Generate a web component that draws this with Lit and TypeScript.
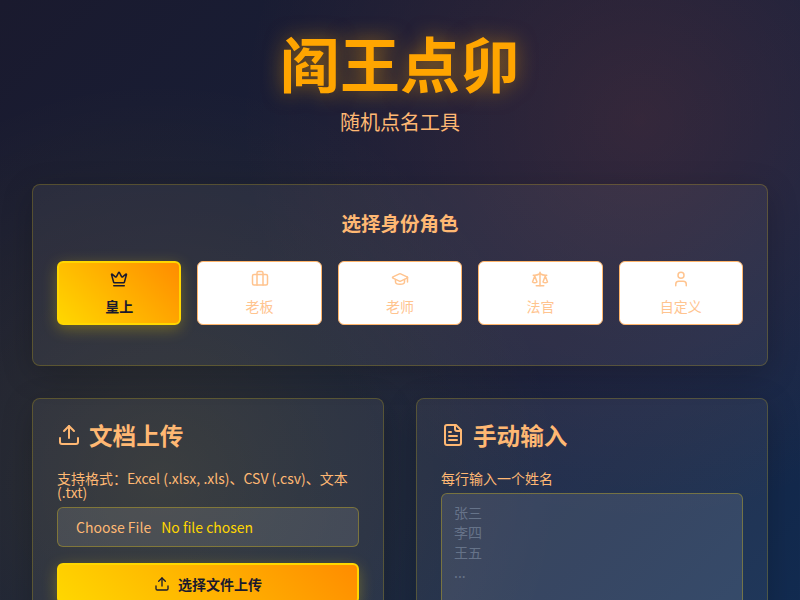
import { LitElement, html, css, svg } from "lit";
import { customElement } from "lit/decorators.js";

const icon = (size: number, body: unknown, sw = 2) => html`<svg width=${size} height=${size} viewBox="0 0 24 24" fill="none" stroke="currentColor" stroke-width=${sw} stroke-linecap="round" stroke-linejoin="round">${body}</svg>`;

const crown = svg`<path d="M11.562 3.266a.5.5 0 0 1 .876 0L15.39 8.87a1 1 0 0 0 1.516.294L21.183 5.5a.5.5 0 0 1 .798.519l-2.834 10.246a1 1 0 0 1-.956.734H5.81a1 1 0 0 1-.957-.734L2.02 6.02a.5.5 0 0 1 .798-.519l4.276 3.664a1 1 0 0 0 1.516-.294z"/><path d="M5 21h14"/>`;
const briefcase = svg`<path d="M16 20V4a2 2 0 0 0-2-2h-4a2 2 0 0 0-2 2v16"/><rect width="20" height="14" x="2" y="6" rx="2"/>`;
const grad = svg`<path d="M21.42 10.922a1 1 0 0 0-.019-1.838L12.83 5.18a2 2 0 0 0-1.66 0L2.6 9.08a1 1 0 0 0 0 1.832l8.57 3.908a2 2 0 0 0 1.66 0z"/><path d="M22 10v6"/><path d="M6 12.5V16a6 3 0 0 0 12 0v-3.5"/>`;
const scale = svg`<path d="m16 16 3-8 3 8c-.87.65-1.92 1-3 1s-2.13-.35-3-1Z"/><path d="m2 16 3-8 3 8c-.87.65-1.92 1-3 1s-2.13-.35-3-1Z"/><path d="M7 21h10"/><path d="M12 3v18"/><path d="M3 7h2c2 0 5-1 7-2 2 1 5 2 7 2h2"/>`;
const user = svg`<path d="M19 21v-2a4 4 0 0 0-4-4H9a4 4 0 0 0-4 4v2"/><circle cx="12" cy="7" r="4"/>`;
const upload = svg`<path d="M21 15v4a2 2 0 0 1-2 2H5a2 2 0 0 1-2-2v-4"/><polyline points="17 8 12 3 7 8"/><line x1="12" y1="3" x2="12" y2="15"/>`;
const file = svg`<path d="M15 2H6a2 2 0 0 0-2 2v16a2 2 0 0 0 2 2h12a2 2 0 0 0 2-2V7Z"/><path d="M14 2v4a2 2 0 0 0 2 2h4"/><path d="M10 9H8"/><path d="M16 13H8"/><path d="M16 17H8"/>`;

const roles = [
  { label: "皇上", icon: crown, active: true },
  { label: "老板", icon: briefcase },
  { label: "老师", icon: grad },
  { label: "法官", icon: scale },
  { label: "自定义", icon: user },
];

@customElement("app-root")
export class AppRoot extends LitElement {
  static styles = css`
    :host {
      display: block;
      height: 600px;
      overflow: hidden;
      font-family: "Noto Sans CJK SC", "Noto Sans", sans-serif;
      color: #ffb873;
      background:
        radial-gradient(circle at 20% 80%, rgba(255, 215, 0, 0.1) 0%, transparent 50%),
        radial-gradient(circle at 80% 20%, rgba(255, 90, 53, 0.13) 0%, transparent 50%),
        linear-gradient(135deg, #1a1a2e 0%, #16213e 50%, #0f3460 100%) 0 0 / 800px 1000px no-repeat;
    }
    .page { padding: 0 32px; box-sizing: border-box; width: 800px; }
    header { padding-top: 22px; height: 184px; box-sizing: border-box; text-align: center; }
    h1 {
      margin: 0;
      font-size: 60px;
      line-height: 80px;
      font-weight: 700;
      color: #ffa500;
      text-shadow: 0 0 20px rgba(255, 165, 0, 0.5);
    }
    .sub { font-size: 20px; line-height: 28px; margin-top: 6px; }
    .panel {
      box-sizing: border-box;
      border: 1px solid rgba(255, 215, 0, 0.2);
      border-radius: 8px;
      background: rgba(255, 255, 255, 0.06);
      box-shadow: 0 8px 32px rgba(0, 0, 0, 0.2);
      padding: 24px;
    }
    .role-panel { margin-bottom: 32px; }
    h2 { margin: 0 0 24px; font-size: 19.5px; line-height: 28px; font-weight: 700; text-align: center; }
    .roles { display: grid; grid-template-columns: repeat(5, 1fr); gap: 16px; margin-bottom: 16px; }
    .role {
      box-sizing: border-box;
      height: 64px;
      background: #fff;
      border: 1px solid #ffb56b;
      border-radius: 6px;
      display: flex;
      flex-direction: column;
      align-items: center;
      padding-top: 8px;
      gap: 8px;
      font-size: 14px;
      line-height: 20px;
      color: #ffc48f;
    }
    .role.active {
      border: 2px solid #ffd700;
      background: linear-gradient(45deg, #ffd700, #ff8c00);
      color: #1a1a2e;
      font-weight: 700;
      padding-top: 7px;
      box-shadow: 0 4px 15px rgba(255, 215, 0, 0.3);
    }
    .cols { display: grid; grid-template-columns: 1fr 1fr; gap: 32px; }
    .col { height: 400px; }
    h3 { margin: 0 0 24px; display: flex; align-items: center; gap: 8px; font-size: 23.6px; line-height: 24px; font-weight: 700; }
    label { display: block; font-size: 14px; line-height: 14px; margin-bottom: 8px; }
    .file {
      box-sizing: border-box;
      height: 40px;
      display: flex;
      align-items: center;
      padding: 0 18px;
      gap: 10px;
      border: 1px solid rgba(255, 215, 0, 0.3);
      border-radius: 6px;
      background: rgba(255, 255, 255, 0.1);
      font-size: 14px;
    }
    .file b { font-weight: 400; color: #ffd700; }
    .upload {
      box-sizing: border-box;
      margin-top: 16px;
      height: 41px;
      display: flex;
      align-items: center;
      justify-content: center;
      gap: 8px;
      border: 2px solid #ffd700;
      border-radius: 6px;
      background: linear-gradient(45deg, #ffd700, #ff8c00);
      color: #1a1a2e;
      font-size: 14px;
      font-weight: 700;
      box-shadow: 0 4px 15px rgba(255, 215, 0, 0.3);
    }
    .area {
      box-sizing: border-box;
      height: 200px;
      padding: 8px 12px;
      border: 1px solid rgba(255, 215, 0, 0.3);
      border-radius: 6px;
      background: rgba(255, 255, 255, 0.1);
      font-size: 14px;
      line-height: 20px;
      color: #667389;
    }
    .area div { height: 20px; }
  `;

  render() {
    return html`<div class="page">
      <header>
        <h1>阎王点卯</h1>
        <div class="sub">随机点名工具</div>
      </header>
      <section class="panel role-panel">
        <h2>选择身份角色</h2>
        <div class="roles">
          ${roles.map((r) => html`<div class="role ${r.active ? "active" : ""}">${icon(18, r.icon)}<span>${r.label}</span></div>`)}
        </div>
      </section>
      <div class="cols">
        <section class="panel col left">
          <h3>${icon(24, upload)}文档上传</h3>
          <label>支持格式：Excel (.xlsx, .xls)、CSV (.csv)、文本 (.txt)</label>
          <div class="file"><span>Choose File</span><b>No file chosen</b></div>
          <div class="upload">${icon(16, upload)}选择文件上传</div>
        </section>
        <section class="panel col right">
          <h3>${icon(24, file)}手动输入</h3>
          <label>每行输入一个姓名</label>
          <div class="area"><div>张三</div><div>李四</div><div>王五</div><div>...</div></div>
        </section>
      </div>
    </div>`;
  }
}
